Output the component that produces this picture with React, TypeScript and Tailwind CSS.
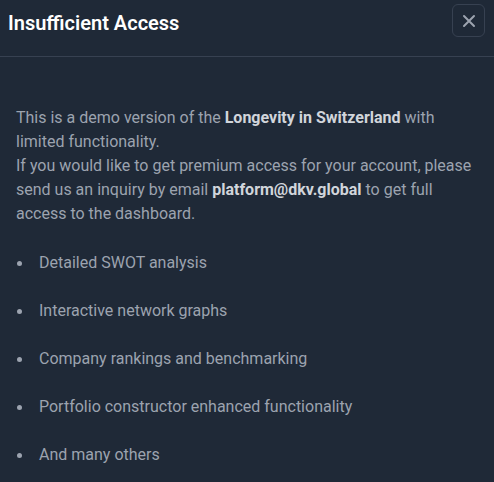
const items = [
  "Detailed SWOT analysis",
  "Interactive network graphs",
  "Company rankings and benchmarking",
  "Portfolio constructor enhanced functionality",
  "And many others",
];

export default function App() {
  return (
    <div
      className="w-[494px] h-[482px] overflow-hidden bg-[#1f2937]"
      style={{ fontFamily: "Roboto, 'Liberation Sans', sans-serif" }}
    >
      <div className="h-[57px] border-b border-[#374151] flex items-start justify-between pl-2 pr-[9px] pt-1">
        <h1 className="mt-[5px] text-[20px] leading-7 font-semibold text-white">Insufficient Access</h1>
        <button className="w-[33px] h-[33px] rounded-md border border-[#374151] flex items-center justify-center text-[#9ca3af]">
          <svg width="14" height="14" viewBox="0 0 14 14" fill="none" stroke="currentColor" strokeWidth="2" strokeLinecap="round">
            <path d="M2 2L12 12M12 2L2 12" />
          </svg>
        </button>
      </div>
      <div className="px-4 pt-[49px] text-[16px] leading-6 text-[#9ca3af]">
        <p>
          This is a demo version of the <b className="font-bold text-[#d1d5db]">Longevity in Switzerland</b> with limited functionality.
          <br />
          If you would like to get premium access for your account, please send us an inquiry by email{" "}
          <b className="font-bold text-[#d1d5db]">platform@dkv.global</b> to get full access to the dashboard.
        </p>
        <ul className="mt-[25px] flex flex-col gap-6">
          {items.map((t) => (
            <li key={t} className="flex items-center">
              <span className="w-[5px] h-[5px] rounded-full bg-[#9ca3af] ml-[1px] mr-[17px]" />
              <span>{t}</span>
            </li>
          ))}
        </ul>
      </div>
    </div>
  );
}
